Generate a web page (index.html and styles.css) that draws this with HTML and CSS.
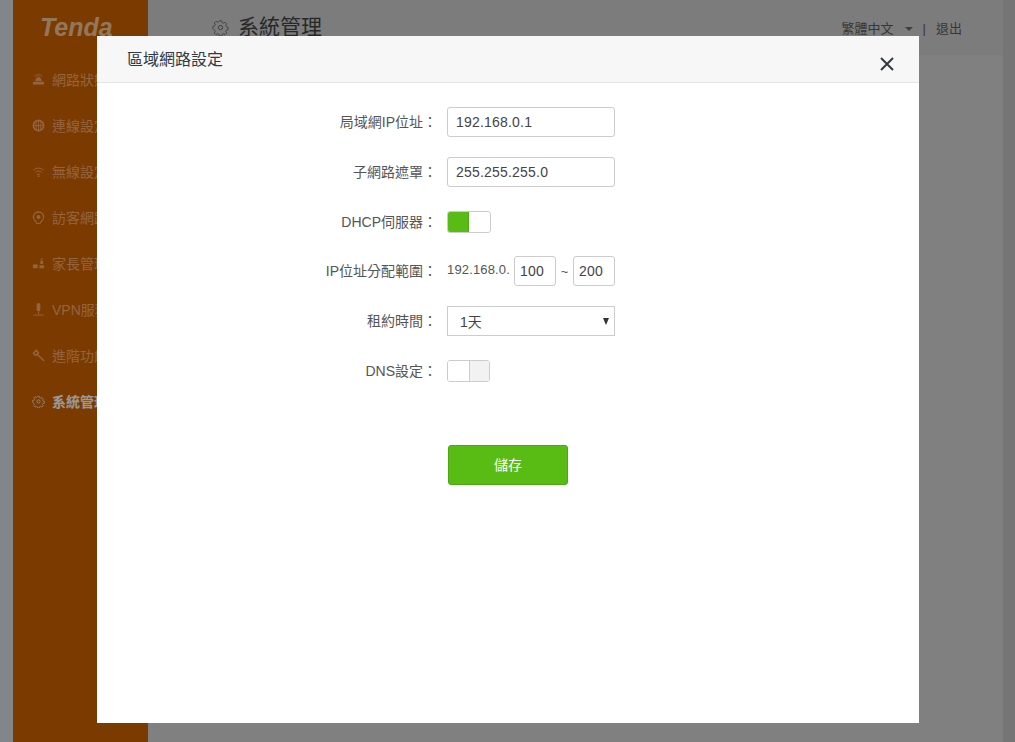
FILE: index.html
```html
<!DOCTYPE html>
<html lang="zh-Hant">
<head>
<meta charset="utf-8">
<title>區域網路設定</title>
<link rel="stylesheet" href="styles.css">
</head>
<body>
<div class="app">
  <aside class="sidebar">
    <div class="logo">Tenda</div>
    <nav class="menu">
      <div class="item"><svg class="ico" viewBox="0 0 14 14"><path d="M1 12.500h12v-3H1zM3.500 8.500a3.500 3.500 0 0 1 7 0z" fill="currentColor"/><path d="M3 3.500a6 6 0 0 1 8 0M5 5a3 3 0 0 1 4 0" fill="none" stroke="currentColor"/></svg><span>網路狀態</span></div>
      <div class="item"><svg class="ico" viewBox="0 0 14 14"><circle cx="7" cy="7" r="5.500" fill="none" stroke="currentColor" stroke-width="1.800"/><path d="M1.500 7h11M7 1.500v11M4.500 2.500v9M9.500 2.500v9" stroke="currentColor" fill="none"/></svg><span>連線設定</span></div>
      <div class="item"><svg class="ico" viewBox="0 0 14 14"><path d="M1.500 5.500a8 8 0 0 1 11 0M3.500 8a5 5 0 0 1 7 0M5.300 10.200a2.500 2.500 0 0 1 3.400 0" fill="none" stroke="currentColor"/><circle cx="7" cy="12" r="1" fill="currentColor"/></svg><span>無線設定</span></div>
      <div class="item"><svg class="ico" viewBox="0 0 14 14"><path d="M7 1a5.500 5.500 0 0 1 3.500 9.700L8.500 13.500h-3L3.500 10.700A5.500 5.500 0 0 1 7 1z" fill="none" stroke="currentColor" stroke-width="1.300"/><circle cx="7" cy="6.500" r="2.200" fill="currentColor"/></svg><span>訪客網路</span></div>
      <div class="item"><svg class="ico" viewBox="0 0 14 14"><path d="M1 12V8h5v4zM8 12V9h5v3zM9 7.500V4h3v3.500z" fill="currentColor"/><path d="M9 3l3-1.500" stroke="currentColor" fill="none"/></svg><span>家長管理</span></div>
      <div class="item"><svg class="ico" viewBox="0 0 14 14"><path d="M5 2a2 2 0 0 1 4 0v5a2 2 0 0 1-4 0z" fill="currentColor"/><path d="M7 9v3M1.500 13h11" stroke="currentColor" fill="none"/></svg><span>VPN服務</span></div>
      <div class="item"><svg class="ico" viewBox="0 0 14 14"><path d="M13 13L6 6M1.500 4.500L4.500 1.500 7 4 4 7z" fill="none" stroke="currentColor" stroke-width="1.600"/></svg><span>進階功能</span></div>
      <div class="item active"><svg class="ico" viewBox="0 0 16 16"><use href="#gear"/></svg><span>系統管理</span></div>
    </nav>
  </aside>
  <main class="content">
    <header class="topbar">
      <div class="page-title">
        <svg class="title-ico" viewBox="0 0 16 16"><g id="gear"><path d="M6.700 1h2.600l.4 1.900 1.300.6 1.700-1 1.800 1.800-1 1.700.6 1.300 1.900.4v2.600l-1.900.4-.6 1.300 1 1.700-1.800 1.800-1.700-1-1.300.6-.4 1.900H6.700l-.4-1.900-1.300-.6-1.700 1-1.800-1.800 1-1.700-.6-1.300L0 9.300V6.700l1.900-.4.600-1.300-1-1.700 1.800-1.800 1.700 1 1.300-.6z" transform="translate(.8 .8) scale(.9)" fill="none" stroke="currentColor" stroke-width=".9"/><circle cx="8" cy="8" r="2" fill="none" stroke="currentColor" stroke-width=".9"/></g></svg>
        <span>系統管理</span>
      </div>
      <div class="top-links">
        <span>繁體中文</span><i class="caret"></i><span class="bar">|</span><span>退出</span>
      </div>
    </header>
  </main>
  <div class="edge"></div>
</div>

<div class="overlay">
  <section class="dialog">
    <header class="dialog-head">
      <h2>區域網路設定</h2>
      <svg class="close" viewBox="0 0 14 14"><path d="M1 1l12 12M13 1L1 13" fill="none" stroke="#333b41" stroke-width="2"/></svg>
    </header>
    <form class="form">
      <div class="row"><label>局域網IP位址：</label><div class="input wide">192.168.0.1</div></div>
      <div class="row"><label>子網路遮罩：</label><div class="input wide">255.255.255.0</div></div>
      <div class="row tight"><label>DHCP伺服器：</label><div class="switch on"><b></b><i></i></div></div>
      <div class="row"><label>IP位址分配範圍：</label><span class="prefix">192.168.0.</span><div class="input small">100</div><span class="tilde">~</span><div class="input small">200</div></div>
      <div class="row"><label>租約時間：</label><div class="select"><span>1天</span><i class="arrow"></i></div></div>
      <div class="row"><label>DNS設定：</label><div class="switch off"><i></i><b></b></div></div>
      <div class="actions"><div class="save">儲存</div></div>
    </form>
  </section>
</div>
</body>
</html>
```
FILE: styles.css
```css
* { box-sizing: border-box; }
html, body { margin: 0; height: 100%; overflow: hidden; }
body {
  font-family: "Liberation Sans", "Noto Sans CJK TC", sans-serif;
  color: #333;
  background: #d5dfe6;
}
.app { display: flex; height: 742px; padding-left: 13px; }
.sidebar { width: 135px; flex: none; background: #cd6200; }
.logo {
  height: 55px; padding: 11px 0 0 27px;
  font: italic bold 25px/32px "Liberation Sans", sans-serif;
  color: #f5c79a;
}
.menu { padding-top: 1px; }
.item {
  height: 46px; display: flex; align-items: center; gap: 7px;
  padding-left: 19px; font-size: 14px; white-space: nowrap;
  color: #f5a868;
}
.item.active { color: #fff; font-weight: bold; }
.ico { width: 13px; height: 13px; flex: none; }
.content { flex: 1; background: #d5d5d5; }
.topbar {
  height: 55px; display: flex; justify-content: space-between; align-items: flex-start;
  background: #cfcfcf; color: #444;
}
.page-title { display: flex; align-items: center; gap: 9px; padding: 14px 0 0 64px; font-size: 21px; line-height: 26px; }
.title-ico { width: 17px; height: 17px; color: #666; }
.top-links { display: flex; align-items: center; padding: 20px 41px 0 0; font-size: 13px; line-height: 18px; color: #5c5c5c; }
.caret { width: 0; height: 0; margin: 0 10px 0 11px; border: 4px solid transparent; border-top-color: #6a6a6a; border-bottom-width: 0; }
.bar { margin-right: 10px; }
.edge { width: 12px; flex: none; background: #c3c3c3; }

.overlay { position: fixed; inset: 0; background: rgba(0,0,0,.4); }
.dialog { position: absolute; left: 97px; top: 36px; width: 822px; height: 687px; background: #fff; }
.dialog-head {
  height: 47px; display: flex; align-items: center; justify-content: space-between;
  padding: 0 25px 0 30px; background: #f7f7f7; border-bottom: 1px solid #e5e5e5;
}
.dialog-head h2 { margin: 1px 0 0; font-size: 16px; line-height: 20px; font-weight: normal; color: #2f3a44; }
.close { width: 14px; height: 14px; margin-top: 10px; }

.form { padding-top: 24px; }
.row { display: flex; align-items: center; height: 30px; margin-bottom: 20px; font-size: 13px; color: #555; }
.row.tight { margin-bottom: 19px; }
.row label { width: 340px; text-align: right; flex: none; margin-right: 10px; padding-bottom: 3px; font-size: 14px; }
.input { height: 30px; border: 1px solid #ccc; border-radius: 3px; background: #fff; font-size: 14px; line-height: 28px; letter-spacing: .2px; color: #444; }
.wide { width: 168px; padding-left: 8px; }
.small { width: 42px; padding-left: 5px; }
.prefix { width: 67px; flex: none; font-size: 13px; letter-spacing: .15px; padding-bottom: 4px; }
.tilde { width: 17px; text-align: center; font-size: 13px; }
.select {
  width: 168px; height: 30px; border: 1px solid #ccc; background: #fff;
  display: flex; align-items: center; justify-content: space-between;
  padding: 0 5px 0 12px; font-size: 14px; color: #444;
}
.arrow { width: 0; height: 0; border: 3.500px solid transparent; border-top: 7px solid #333; border-bottom-width: 0; }
.switch { width: 44px; height: 22px; display: flex; border: 1px solid #ccc; border-radius: 3px; overflow: hidden; background: #fff; }
.switch b, .switch i { flex: 1; }
.switch.on b { background: #58bc14; flex: 0 0 21px; }
.switch.on i { background: #fff; box-shadow: 0 0 2px rgba(0,0,0,.25); }
.switch.off { width: 43px; }
.switch.off i { background: #fff; flex: 0 0 22px; border-right: 1px solid #ccc; }
.switch.off b { background: #f2f2f2; }
.actions { padding: 39px 0 0 351px; }
.save {
  width: 120px; height: 40px; border: 1px solid #4ea814; border-radius: 3px; background: #58bc14;
  color: #fff; font-size: 14px; line-height: 39px; text-align: center;
}
```
